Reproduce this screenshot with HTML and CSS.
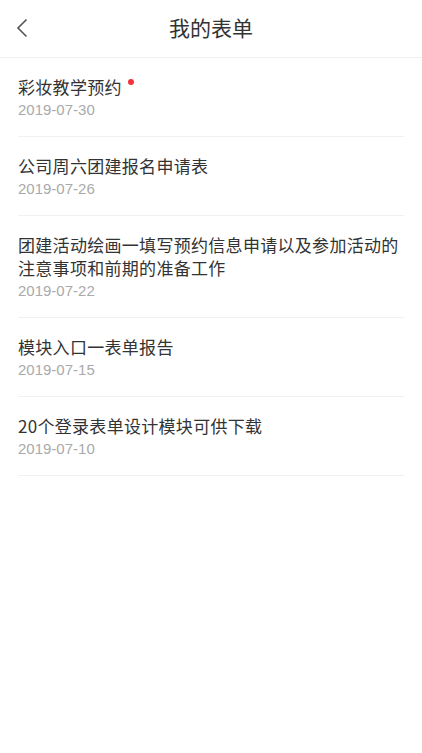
FILE: index.html
```html
<!doctype html>
<html lang="zh-CN">
<head>
	<meta charset="UTF-8" />
	<title>我的表单</title>
	<link rel="stylesheet" href="styles.css">
</head>
<body>
	<!--顶部标题栏-->
	<div class="header">
		<span class="back">
			<svg width="12" height="20" viewBox="0 0 12 20"><path d="M10.5 1.5 L2 10 L10.5 18.5" fill="none" stroke="#555" stroke-width="1.6"/></svg>
		</span>
		<h1 class="title">我的表单</h1>
	</div>
	<!--表单列表-->
	<ul class="list">
		<li class="item">
			<p class="name">彩妆教学预约<i class="dot"></i></p>
			<p class="date">2019-07-30</p>
		</li>
		<li class="item">
			<p class="name">公司周六团建报名申请表</p>
			<p class="date">2019-07-26</p>
		</li>
		<li class="item">
			<p class="name">团建活动绘画一填写预约信息申请以及参加活动的注意事项和前期的准备工作</p>
			<p class="date">2019-07-22</p>
		</li>
		<li class="item">
			<p class="name">模块入口一表单报告</p>
			<p class="date">2019-07-15</p>
		</li>
		<li class="item">
			<p class="name">20个登录表单设计模块可供下载</p>
			<p class="date">2019-07-10</p>
		</li>
	</ul>
</body>
</html>
```

FILE: styles.css
```css
* {
    padding: 0;
    margin: 0;
    list-style: none;
    border: 0;
}

body {
    background: #fff;
    font-family: "Noto Sans CJK SC", "Liberation Sans", sans-serif;
    color: #333;
}

.header {
    height: 58px;
    padding-bottom: 3px;
    box-sizing: border-box;
    border-bottom: 1px solid #f0f0f0;
    display: flex;
    align-items: center;
    justify-content: center;
    position: relative;
}

.header .back {
    position: absolute;
    left: 16px;
    top: 18px;
    width: 12px;
    height: 20px;
}

.header .back svg {
    display: block;
}

.title {
    font-size: 21px;
    font-weight: normal;
    color: #333;
    line-height: 28px;
}

.list {
    padding: 0 18px;
}

.item {
    padding: 17px 0 16px;
    border-bottom: 1px solid #f0f0f0;
}

.name {
    font-size: 17px;
    line-height: 23px;
    letter-spacing: 0.3px;
    color: #333;
}

.dot {
    display: inline-block;
    width: 6px;
    height: 6px;
    border-radius: 50%;
    background: #f5313b;
    margin-left: 6px;
    vertical-align: 9px;
}

.date {
    margin-top: 2px;
    font-family: "Liberation Sans", "Noto Sans CJK SC", sans-serif;
    font-size: 15px;
    line-height: 20px;
    color: #aaa;
}
```
